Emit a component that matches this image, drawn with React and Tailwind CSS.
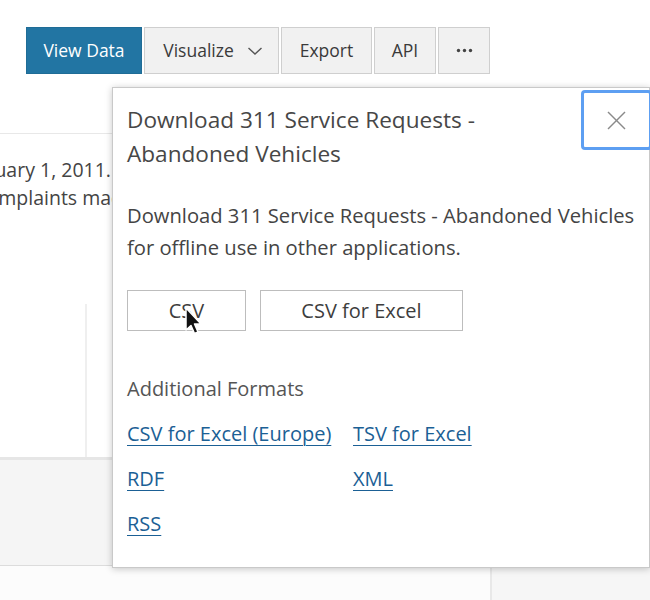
import React from 'react';

const font = { fontFamily: '"Open Sans", "Noto Sans", sans-serif' };

const ToolbarButton = ({ children, className = '' }) => (
  <button
    className={`h-[47px] flex items-center justify-center border border-[#cfcfcf] bg-[#f1f1f1] text-[17.5px] text-[#3a3a3a] ${className}`}
  >
    {children}
  </button>
);

const Toolbar = () => (
  <div className="flex gap-[2px] pl-[26px] pt-[27px] h-[74px]">
    <button className="h-[47px] w-[116px] flex items-center justify-center bg-[#2275a3] border border-[#1f6c96] text-[17.5px] text-white">
      View Data
    </button>
    <ToolbarButton className="w-[135px] gap-[13px] pl-[3px]">
      Visualize
      <svg width="16" height="10" viewBox="0 0 16 10" fill="none" stroke="#555" strokeWidth="1.4">
        <polyline points="1.5,2 8,8 14.5,2" />
      </svg>
    </ToolbarButton>
    <ToolbarButton className="w-[91px]">Export</ToolbarButton>
    <ToolbarButton className="w-[62px]">API</ToolbarButton>
    <ToolbarButton className="w-[52px]">
      <svg width="17" height="5" viewBox="0 0 17 5" fill="#444">
        <circle cx="2.5" cy="2.5" r="1.7" />
        <circle cx="8.5" cy="2.5" r="1.7" />
        <circle cx="14.5" cy="2.5" r="1.7" />
      </svg>
    </ToolbarButton>
  </div>
);

const PageBehind = () => (
  <div className="text-[19.5px] text-[#444]">
    <div className="h-[60px] border-b border-[#e8e8e8]" />
    <div className="pt-[22px] leading-[28px]">
      <div className="w-[111px] flex justify-end overflow-hidden">
        <span className="whitespace-nowrap">
          All open abandoned vehicle requests completed since January 1, 2011.
        </span>
      </div>
      <div className="w-[134px] flex justify-end overflow-hidden">
        <span className="whitespace-nowrap">
          The 311 center records abandoned vehicle complaints made
        </span>
      </div>
    </div>
    <div className="h-[92px]" />
    <div className="flex h-[153px]">
      <div className="w-[85px]" />
      <div className="w-[2px] bg-[#efefef]" />
    </div>
    <div className="h-[109px] bg-[#f5f5f5] border-t-[3px] border-[#e6e6e6] border-b border-b-[#dcdcdc]" />
    <div className="flex h-[40px]">
      <div className="w-[490px] bg-[#fcfcfc]" />
      <div className="flex-1 bg-[#f6f6f6] border-l-2 border-[#e8e8e8]" />
    </div>
  </div>
);

const Cursor = () => (
  <svg
    className="absolute left-[184px] top-[306px]"
    width="20"
    height="30"
    viewBox="0 0 20 30"
  >
    <path
      d="M2 2 L2 24 L7 19.5 L10.5 27.5 L14 26 L10.5 18 L17 18 Z"
      fill="#111"
      stroke="#fff"
      strokeWidth="1.5"
      strokeLinejoin="round"
    />
  </svg>
);

const DownloadPopup = () => {
  const formats = [
    'CSV for Excel (Europe)',
    'TSV for Excel',
    'RDF',
    'XML',
    'RSS',
  ];

  return (
    <div className="absolute left-[112px] top-[87px] w-[538px] h-[481px] bg-white border border-[#c9c9c9] shadow-[0_1px_7px_rgba(0,0,0,0.22)]">
      <button className="absolute right-[-3px] top-[2px] w-[71px] h-[60px] flex items-center justify-center border-[3px] border-[#5d9ff2] rounded-[4px] bg-white">
        <svg width="19" height="19" viewBox="0 0 19 19" stroke="#8a8a8a" strokeWidth="1.5">
          <line x1="1" y1="1" x2="18" y2="18" />
          <line x1="18" y1="1" x2="1" y2="18" />
        </svg>
      </button>

      <div className="pl-[14px] pr-[6px] pt-[15px]">
        <h2 className="w-[420px] text-[22.6px] leading-[34px] text-[#474747] font-normal">
          Download 311 Service Requests - Abandoned Vehicles
        </h2>

        <p className="mt-[28px] text-[20.2px] leading-[32px] text-[#444]">
          Download 311 Service Requests - Abandoned Vehicles for offline use in other applications.
        </p>

        <div className="mt-[27px] flex gap-[14px]">
          <button className="h-[41px] w-[119px] border border-[#bdbdbd] bg-white text-[20px] text-[#3d3d3d]">
            CSV
          </button>
          <button className="h-[41px] w-[203px] border border-[#bdbdbd] bg-white text-[20px] text-[#3d3d3d]">
            CSV for Excel
          </button>
        </div>

        <h3 className="mt-[44px] text-[20px] leading-[28px] text-[#555] font-normal">
          Additional Formats
        </h3>

        <div className="mt-[17px] grid grid-cols-[226px_auto] gap-y-[17px] text-[20px] leading-[28px]">
          {formats.map((f) => (
            <a
              key={f}
              href="#"
              className="text-[#1b6095] underline underline-offset-[4px] decoration-1 justify-self-start"
            >
              {f}
            </a>
          ))}
        </div>
      </div>
    </div>
  );
};

export default function App() {
  return (
    <div className="relative w-[650px] h-[600px] overflow-hidden bg-white" style={font}>
      <Toolbar />
      <PageBehind />
      <DownloadPopup />
      <Cursor />
    </div>
  );
}
